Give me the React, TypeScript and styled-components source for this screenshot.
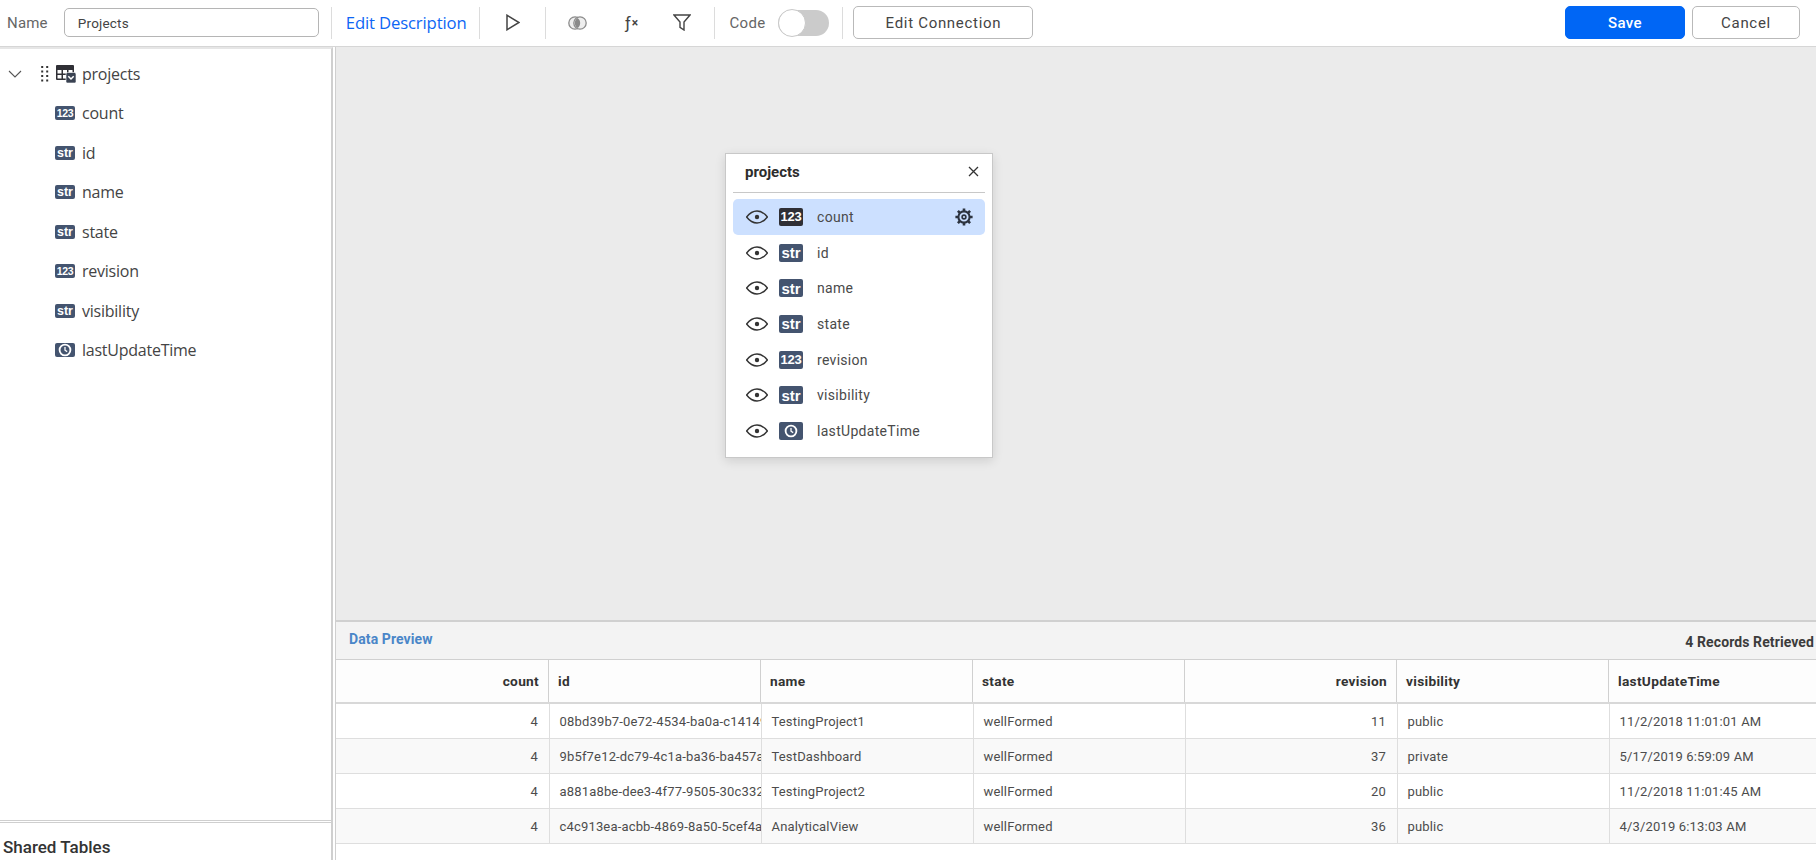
import React from "react";
import styled, { createGlobalStyle } from "styled-components";

const Global = createGlobalStyle`
  html, body { margin: 0; padding: 0; height: 100%; overflow: hidden; background: #fff; }
  body { font-family: Roboto, "Liberation Sans", sans-serif; color: #333; }
  * { box-sizing: border-box; }
`;

const Page = styled.div`
  width: 1816px;
  height: 860px;
  display: flex;
  flex-direction: column;
  overflow: hidden;
`;

const Toolbar = styled.header`
  height: 47px;
  flex: none;
  display: flex;
  align-items: center;
  padding: 0 16px 1px 7px;
  border-bottom: 1px solid #d6d6d6;
  background: #fff;
`;

const ToolLabel = styled.label`
  font-size: 15px;
  color: #666;
  letter-spacing: 0.2px;
`;

const NameInput = styled.div`
  width: 255px;
  height: 29px;
  margin-left: 16px;
  border: 1px solid #b5b5b5;
  border-radius: 5px;
  padding-left: 13px;
  display: flex;
  align-items: center;
  font-size: 13.5px;
  color: #444;
  letter-spacing: 0.2px;
`;

const Divider = styled.span<{ $left?: number; $right?: number }>`
  width: 1px;
  height: 32px;
  flex: none;
  background: #dcdcdc;
  margin-left: ${(p) => p.$left ?? 0}px;
  margin-right: ${(p) => p.$right ?? 0}px;
`;

const LinkButton = styled.a`
  font-family: "Open Sans", sans-serif;
  font-size: 16.7px;
  color: #0d66f5;
  white-space: nowrap;
  letter-spacing: -0.15px;
`;

const ToolIcon = styled.span<{ $width: number; $left?: number }>`
  width: ${(p) => p.$width}px;
  flex: none;
  display: flex;
  align-items: center;
  justify-content: center;
  margin-left: ${(p) => p.$left ?? 0}px;
  color: #444;
`;

const FxLabel = styled.span`
  font-family: Roboto, sans-serif;
  font-size: 17px;
  color: #444;
  white-space: nowrap;
  & > sup {
    font-weight: 700;
    font-size: 12px;
    vertical-align: 2px;
    line-height: 0;
    margin-left: 1px;
  }
`;

const CodeLabel = styled.span`
  font-size: 15px;
  color: #666;
  letter-spacing: 0.3px;
  margin-left: 14px;
`;

const Switch = styled.span`
  width: 51px;
  height: 26px;
  margin: 0 13px 0 13px;
  border-radius: 13px;
  background: #cbcbcb;
  flex: none;
  display: flex;
  align-items: center;
  &::before {
    content: "";
    width: 26px;
    height: 26px;
    border-radius: 50%;
    background: #fff;
    border: 1px solid #c8c8c8;
  }
`;

const OutlineButton = styled.button<{ $width: number; $left?: number }>`
  width: ${(p) => p.$width}px;
  height: 33px;
  margin-left: ${(p) => p.$left ?? 0}px;
  flex: none;
  background: #fff;
  border: 1px solid #b9b9b9;
  border-radius: 5px;
  font-family: Roboto, sans-serif;
  font-size: 15px;
  color: #444;
  letter-spacing: 0.7px;
  padding: 0;
`;

const PrimaryButton = styled.button`
  width: 120px;
  height: 33px;
  flex: none;
  margin-left: auto;
  background: #0066f5;
  border: 1px solid #0066f5;
  border-radius: 5px;
  font-family: Roboto, sans-serif;
  font-size: 15px;
  font-weight: 500;
  color: #fff;
  letter-spacing: 0.4px;
  padding: 0;
`;

const Body = styled.div`
  flex: 1;
  min-height: 0;
  display: flex;
`;

const Sidebar = styled.aside`
  width: 336px;
  flex: none;
  display: flex;
  flex-direction: column;
  border-right: 1px solid #cfcfcf;
  padding-right: 2px;
`;

const SideInner = styled.div`
  flex: 1;
  display: flex;
  flex-direction: column;
  border-right: 2px solid #cfcfcf;
  border-top: 2px solid #e6e6e6;
  min-height: 0;
`;

const Tree = styled.ul`
  flex: 1;
  list-style: none;
  margin: 0;
  padding: 5px 0 0;
`;

const TreeRow = styled.li`
  height: 39.5px;
  display: flex;
  align-items: center;
  padding-left: 55px;
`;

const TreeRootRow = styled(TreeRow)`
  padding-left: 8px;
`;

const TreeText = styled.span`
  font-family: "Open Sans", sans-serif;
  font-size: 16px;
  color: #444;
  margin-left: 7px;
  letter-spacing: -0.24px;
`;

const RootText = styled(TreeText)`
  margin-left: 6px;
`;

const TypeTag = styled.span<{ $dark?: boolean; $size?: "sm" | "md"; $kind: string }>`
  width: ${(p) => (p.$size === "md" ? 24 : 20)}px;
  height: ${(p) => (p.$size === "md" ? 18 : 14)}px;
  flex: none;
  display: inline-flex;
  align-items: center;
  justify-content: center;
  border-radius: 2px;
  background: ${(p) => (p.$dark ? "#2f2f35" : "#44546f")};
  color: #fff;
  font-family: "Liberation Sans", Roboto, sans-serif;
  font-weight: 700;
  font-size: ${(p) =>
    p.$size === "md" ? (p.$kind === "str" ? 15 : 13) : p.$kind === "str" ? 12.5 : 10.5}px;
  letter-spacing: ${(p) => (p.$kind === "123" ? -0.3 : 0)}px;
`;

const SharedBox = styled.div`
  height: 38px;
  flex: none;
  border-top: 1px solid #cfcfcf;
  box-shadow: 0 -1px 0 0 #fff, 0 -2px 0 0 #cfcfcf;
  padding: 14px 0 0 3px;
  font-size: 17px;
  font-weight: 500;
  color: #333;
  line-height: 20px;
  white-space: nowrap;
`;

const Main = styled.main`
  flex: 1;
  min-width: 0;
  display: flex;
  flex-direction: column;
`;

const Canvas = styled.section`
  height: 573px;
  flex: none;
  background: #ebebeb;
  padding: 106px 0 0 389px;
`;

const FieldCard = styled.div`
  width: 268px;
  height: 305px;
  background: #fff;
  border: 1px solid #c8c8c8;
  box-shadow: 0 3px 10px rgba(0, 0, 0, 0.12);
  padding: 0 7px;
`;

const CardHead = styled.div`
  height: 39px;
  border-bottom: 1px solid #c8c8c8;
  display: flex;
  align-items: center;
  justify-content: space-between;
  padding: 0 6px 3px 12px;
  font-size: 15px;
  font-weight: 700;
  color: #2d2d2d;
`;

const FieldList = styled.ul`
  list-style: none;
  margin: 6px 0 0;
  padding: 0;
`;

const FieldRow = styled.li<{ $active?: boolean }>`
  height: 35.7px;
  display: flex;
  align-items: center;
  padding: 0 12px 0 13px;
  border-radius: 5px;
  background: ${(p) => (p.$active ? "#cce0ff" : "transparent")};
`;

const EyeBox = styled.span`
  width: 22px;
  flex: none;
  display: flex;
  margin-right: 11px;
`;

const FieldName = styled.span`
  flex: 1;
  margin-left: 14px;
  font-size: 14px;
  color: #4a4a4a;
  letter-spacing: 0.3px;
`;

const Preview = styled.section`
  flex: 1;
  min-height: 0;
  border-top: 2px solid #d0d0d0;
  display: flex;
  flex-direction: column;
`;

const PreviewBar = styled.div`
  height: 37px;
  flex: none;
  background: #f3f3f3;
  display: flex;
  justify-content: space-between;
  padding: 0 0 0 13px;
  font-size: 14px;
  font-weight: 700;
`;

const PreviewTitle = styled.span`
  color: #4a86c8;
  line-height: 35px;
  letter-spacing: 0.1px;
`;

const RecordCount = styled.span`
  color: #3c3c3c;
  line-height: 40px;
  padding-right: 2px;
  white-space: nowrap;
  letter-spacing: 0.1px;
`;

const Table = styled.div`
  overflow: hidden;
  width: 1480px;
`;

const HeadRow = styled.div`
  display: flex;
  height: 45px;
  width: 1490px;
  background: #fdfdfd;
  border-top: 1px solid #d0d0d0;
  border-bottom: 2px solid #d8d8d8;
`;

const HeadCell = styled.div<{ $right?: boolean; $width: number }>`
  width: ${(p) => p.$width}px;
  flex: none;
  height: 42px;
  display: flex;
  align-items: center;
  justify-content: ${(p) => (p.$right ? "flex-end" : "flex-start")};
  padding: 0 9px;
  border-right: 1px solid #d0d0d0;
  font-size: 13.7px;
  font-weight: 700;
  color: #333;
  letter-spacing: 0.3px;
`;

const DataRow = styled.div<{ $alt?: boolean }>`
  display: flex;
  height: 35px;
  width: 1490px;
  background: ${(p) => (p.$alt ? "#f9f9f9" : "#fff")};
  border-bottom: 1px solid #dedede;
`;

const DataCell = styled.div<{ $right?: boolean; $width: number }>`
  width: ${(p) => p.$width}px;
  flex: none;
  height: 34px;
  display: flex;
  align-items: center;
  justify-content: ${(p) => (p.$right ? "flex-end" : "flex-start")};
  padding: 0 ${(p) => (p.$right ? 11 : 0)}px 0 ${(p) => (p.$right ? 0 : 9.5)}px;
  border-right: 1px solid #dedede;
  font-size: 13px;
  color: #4c4c4c;
  letter-spacing: 0.17px;
  white-space: nowrap;
  overflow: hidden;
`;

const Eye = () => (
  <svg width="22" height="14" viewBox="0 0 22 14" fill="none">
    <path d="M.6 7C3.8 2.9 7.2 1 11 1s7.2 1.9 10.4 6c-3.2 4.1-6.6 6-10.4 6S3.8 11.1.6 7Z" stroke="#333" strokeWidth="1.4" />
    <circle cx="11" cy="7" r="2.2" fill="#333" />
  </svg>
);

const Clock = () => (
  <svg width="14" height="14" viewBox="0 0 14 14" fill="none">
    <circle cx="7" cy="7" r="5.4" stroke="#fff" strokeWidth="1.8" />
    <path d="M7 3.9V7.2L9.2 8.6" stroke="#fff" strokeWidth="1.3" />
  </svg>
);

const Gear = () => (
  <svg width="18" height="18" viewBox="0 0 18 18" fill="none" stroke="#2d3440">
    <circle cx="9" cy="9" r="5.6" strokeWidth="2.1" />
    <circle cx="9" cy="9" r="1.9" strokeWidth="1.6" />
    <path
      d="M9 .4v2.8M9 14.8v2.8M.4 9h2.8M14.8 9h2.8M2.9 2.9l2 2M13.1 13.1l2 2M2.9 15.1l2-2M13.1 4.9l2-2"
      strokeWidth="2.6"
    />
  </svg>
);

const Close = () => (
  <svg width="11" height="11" viewBox="0 0 11 11" fill="none" stroke="#333" strokeWidth="1.3">
    <path d="M1 1l9 9M10 1l-9 9" />
  </svg>
);

const TableGlyph = () => (
  <svg width="20" height="18" viewBox="0 0 20 18">
    <rect x="0" y="0" width="18" height="15" rx="1" fill="#2f2f35" />
    <g fill="#fff">
      <rect x="1.5" y="5" width="4" height="3.5" />
      <rect x="7" y="5" width="4" height="3.5" />
      <rect x="12.5" y="5" width="4" height="3.5" />
      <rect x="1.5" y="10" width="4" height="3.5" />
      <rect x="7" y="10" width="4" height="3.5" />
    </g>
    <rect x="10" y="7.5" width="10" height="10.5" rx="1.5" fill="#3a4252" stroke="#fff" strokeWidth=".6" />
    <path d="M12.3 11.2l2.7 2.8 2.7-2.8" fill="none" stroke="#fff" strokeWidth="1.5" />
  </svg>
);

const Grip = () => (
  <svg width="8" height="16" viewBox="0 0 8 16" fill="#333">
    {[1, 5.5, 10, 14.5].flatMap((y) =>
      [1.2, 6.2].map((x) => <rect key={`${x}-${y}`} x={x - 1} y={y - 1} width="2" height="2" />)
    )}
  </svg>
);

const Chevron = () => (
  <svg width="14" height="8" viewBox="0 0 14 8" fill="none" stroke="#555" strokeWidth="1.1">
    <path d="M1 1l6 6 6-6" />
  </svg>
);

const Play = () => (
  <svg width="14" height="17" viewBox="0 0 14 17" fill="none" stroke="#444" strokeWidth="1.5">
    <path d="M1 1.2v14.6l12-7.3Z" />
  </svg>
);

const Join = () => (
  <svg width="19" height="14" viewBox="0 0 19 14">
    <circle cx="7" cy="7" r="6.2" fill="#eee" stroke="#8c8c8c" strokeWidth="1.3" />
    <circle cx="12" cy="7" r="6.2" fill="#eee" stroke="#8c8c8c" strokeWidth="1.3" />
    <path d="M9.5 1.9a6.2 6.2 0 0 1 0 10.2 6.2 6.2 0 0 1 0-10.2Z" fill="#8a8a8a" />
  </svg>
);

const Funnel = () => (
  <svg width="18" height="17" viewBox="0 0 18 17" fill="none" stroke="#444" strokeWidth="1.4">
    <path d="M1 1h16l-6 7v8L7 13.4V8Z" />
  </svg>
);

const treeFields = [
  { name: "count", type: "123" },
  { name: "id", type: "str" },
  { name: "name", type: "str" },
  { name: "state", type: "str" },
  { name: "revision", type: "123" },
  { name: "visibility", type: "str" },
  { name: "lastUpdateTime", type: "time" },
];

const columns = [
  { name: "count", right: true, head: 213, width: 214 },
  { name: "id", head: 212, width: 212 },
  { name: "name", head: 212, width: 212 },
  { name: "state", head: 212, width: 212 },
  { name: "revision", right: true, head: 212, width: 212 },
  { name: "visibility", head: 212, width: 212 },
  { name: "lastUpdateTime", head: 212, width: 212 },
];

const rows = [
  ["4", "08bd39b7-0e72-4534-ba0a-c14149ffb1a2", "TestingProject1", "wellFormed", "11", "public", "11/2/2018 11:01:01 AM"],
  ["4", "9b5f7e12-dc79-4c1a-ba36-ba457a1c0c8e", "TestDashboard", "wellFormed", "37", "private", "5/17/2019 6:59:09 AM"],
  ["4", "a881a8be-dee3-4f77-9505-30c33290ab11", "TestingProject2", "wellFormed", "20", "public", "11/2/2018 11:01:45 AM"],
  ["4", "c4c913ea-acbb-4869-8a50-5cef4a6f21d3", "AnalyticalView", "wellFormed", "36", "public", "4/3/2019 6:13:03 AM"],
];

const tagContent = (type: string) => (type === "time" ? <Clock /> : type);

export default function App() {
  return (
    <Page>
      <Global />
      <Toolbar>
        <ToolLabel>Name</ToolLabel>
        <NameInput>Projects</NameInput>
        <Divider $left={12} $right={14} />
        <LinkButton>Edit Description</LinkButton>
        <Divider $left={13} />
        <ToolIcon $width={65}>
          <Play />
        </ToolIcon>
        <Divider />
        <ToolIcon $width={62}>
          <Join />
        </ToolIcon>
        <ToolIcon $width={30} $left={8}>
          <FxLabel>
            ƒ<sup>×</sup>
          </FxLabel>
        </ToolIcon>
        <ToolIcon $width={20} $left={26}>
          <Funnel />
        </ToolIcon>
        <Divider $left={22} />
        <CodeLabel>Code</CodeLabel>
        <Switch />
        <Divider />
        <OutlineButton $width={180} $left={10}>
          Edit Connection
        </OutlineButton>
        <PrimaryButton>Save</PrimaryButton>
        <OutlineButton $width={108} $left={7}>
          Cancel
        </OutlineButton>
      </Toolbar>
      <Body>
        <Sidebar>
          <SideInner>
            <Tree>
              <TreeRootRow>
                <Chevron />
                <ToolIcon $width={8} $left={19}>
                  <Grip />
                </ToolIcon>
                <ToolIcon $width={20} $left={7}>
                  <TableGlyph />
                </ToolIcon>
                <RootText>projects</RootText>
              </TreeRootRow>
              {treeFields.map((f) => (
                <TreeRow key={f.name}>
                  <TypeTag $kind={f.type}>{tagContent(f.type)}</TypeTag>
                  <TreeText>{f.name}</TreeText>
                </TreeRow>
              ))}
            </Tree>
            <SharedBox>Shared Tables</SharedBox>
          </SideInner>
        </Sidebar>
        <Main>
          <Canvas>
            <FieldCard>
              <CardHead>
                projects
                <Close />
              </CardHead>
              <FieldList>
                {treeFields.map((f, i) => (
                  <FieldRow key={f.name} $active={i === 0}>
                    <EyeBox>
                      <Eye />
                    </EyeBox>
                    <TypeTag $size="md" $dark={i === 0} $kind={f.type}>
                      {tagContent(f.type)}
                    </TypeTag>
                    <FieldName>{f.name}</FieldName>
                    {i === 0 && <Gear />}
                  </FieldRow>
                ))}
              </FieldList>
            </FieldCard>
          </Canvas>
          <Preview>
            <PreviewBar>
              <PreviewTitle>Data Preview</PreviewTitle>
              <RecordCount>4 Records Retrieved</RecordCount>
            </PreviewBar>
            <Table>
              <HeadRow>
                {columns.map((c) => (
                  <HeadCell key={c.name} $right={c.right} $width={c.head}>
                    {c.name}
                  </HeadCell>
                ))}
              </HeadRow>
              {rows.map((r, ri) => (
                <DataRow key={r[1]} $alt={ri % 2 === 1}>
                  {r.map((v, ci) => (
                    <DataCell key={ci} $right={columns[ci].right} $width={columns[ci].width}>
                      {v}
                    </DataCell>
                  ))}
                </DataRow>
              ))}
            </Table>
          </Preview>
        </Main>
      </Body>
    </Page>
  );
}
